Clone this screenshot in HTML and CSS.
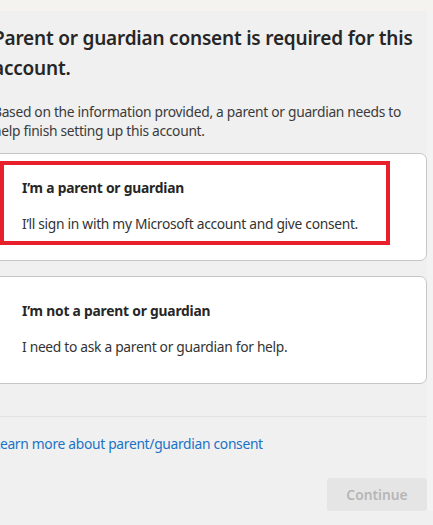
FILE: index.html
```html
<!DOCTYPE html>
<html lang="en">
<head>
<meta charset="utf-8">
<title>Parent or guardian consent</title>
<link rel="stylesheet" href="styles.css">
</head>
<body>
<div class="topbar"></div>
<div class="shell">
  <main class="main">
    <h1 class="title">Parent or guardian consent is required for this account.</h1>
    <p class="intro">Based on the information provided, a parent or guardian needs to help finish setting up this account.</p>
    <div class="options">
      <div class="card">
        <div class="card-title">I’m a parent or guardian</div>
        <div class="card-desc">I’ll sign in with my Microsoft account and give consent.</div>
        <div class="highlight"></div>
      </div>
      <div class="card">
        <div class="card-title">I’m not a parent or guardian</div>
        <div class="card-desc">I need to ask a parent or guardian for help.</div>
      </div>
    </div>
    <div class="footer">
      <a class="link" href="#">Learn more about parent/guardian consent</a>
      <div class="actions"><button class="btn" disabled>Continue</button></div>
    </div>
  </main>
  <div class="edge"></div>
</div>
</body>
</html>
```
FILE: styles.css
```css
html, body {
  margin: 0;
  padding: 0;
}
body {
  background: #f0f0f0;
  font-family: "Noto Sans", "Open Sans", sans-serif;
  color: #1f1f1f;
  overflow: hidden;
  height: 525px;
}
.topbar {
  height: 11px;
  background: #f5f3ef;
}
.shell {
  display: flex;
}
.main {
  width: 434px;
  flex: none;
  margin-left: -7px;
}
.edge {
  flex: 1;
  background: #f3f3f3;
  align-self: stretch;
}
.title {
  margin: 12px 0 0;
  font-size: 19px;
  line-height: 30px;
  font-weight: 600;
  color: #262626;
  letter-spacing: -0.2px;
}
.intro {
  margin: 19px 0 0;
  font-size: 13.8px;
  line-height: 19px;
  color: #3b3b3b;
  letter-spacing: -0.3px;
}
.options {
  margin-top: 13px;
  display: flex;
  flex-direction: column;
  gap: 15px;
}
.card {
  position: relative;
  background: #ffffff;
  border: 1px solid #c6c6c6;
  border-radius: 7px;
  padding: 24px 20px 26px 28px;
}
.card-title {
  font-size: 13.8px;
  line-height: 20px;
  font-weight: 700;
  color: #262626;
  letter-spacing: -0.2px;
}
.card-desc {
  margin-top: 16px;
  font-size: 13.8px;
  line-height: 20px;
  color: #333333;
  letter-spacing: -0.3px;
}
.highlight {
  position: absolute;
  left: 6px;
  top: 7px;
  width: 382px;
  height: 76px;
  border: 4px solid #e8202b;
}
.footer {
  margin-top: 32px;
  border-top: 1px solid #e2e2e2;
  padding-top: 17px;
}
.link {
  display: block;
  font-size: 13.8px;
  line-height: 20px;
  color: #1a73c6;
  text-decoration: none;
  letter-spacing: -0.3px;
}
.actions {
  display: flex;
  justify-content: flex-end;
  margin-top: 24px;
}
.btn {
  width: 100px;
  height: 33px;
  border: none;
  border-radius: 3px;
  background: #e5e5e5;
  color: #b6b6b6;
  font-family: inherit;
  font-size: 13.8px;
  font-weight: 600;
}
```
